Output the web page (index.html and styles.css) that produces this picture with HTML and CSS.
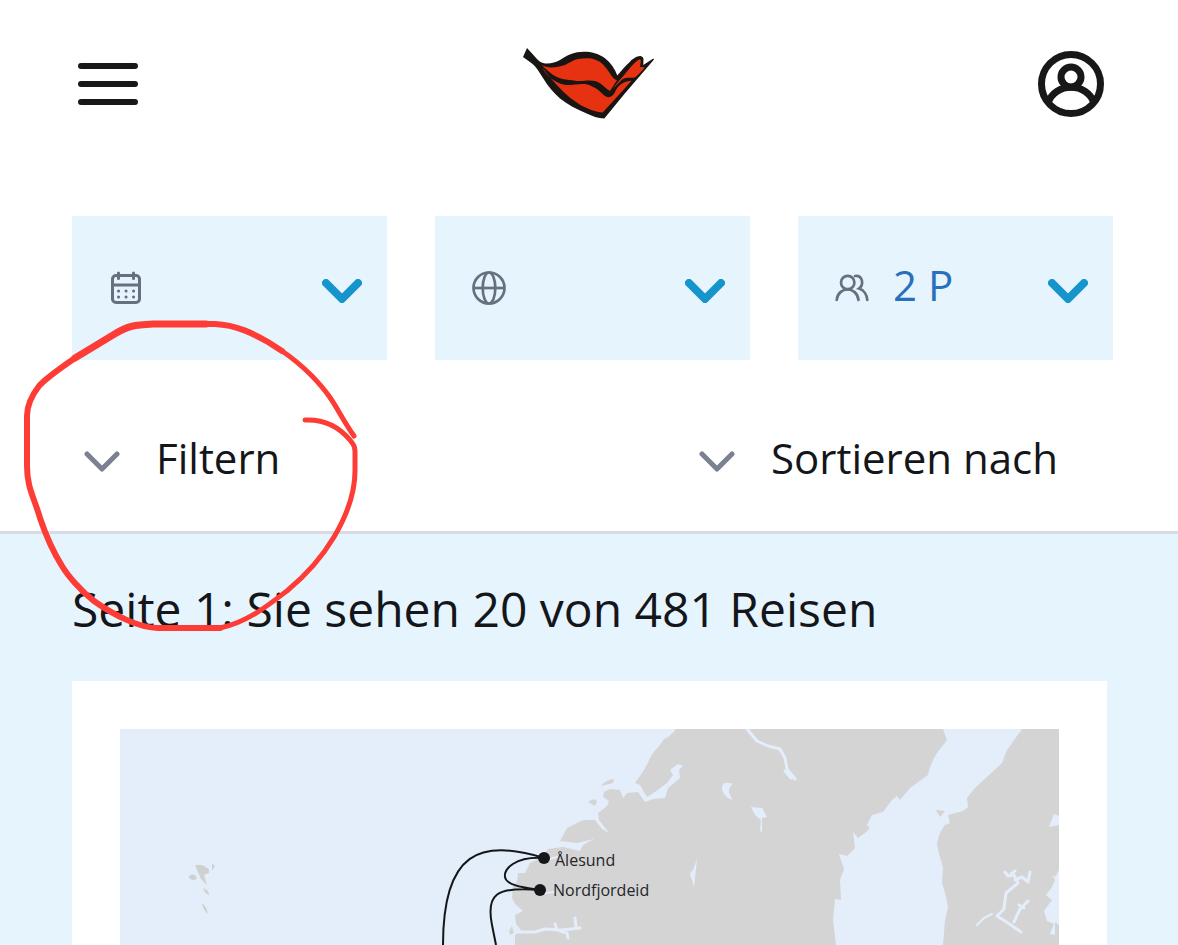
FILE: index.html
```html
<!DOCTYPE html>
<html lang="de">
<head>
<meta charset="utf-8">
<meta name="viewport" content="width=device-width, initial-scale=1">
<title>Reisen</title>
<link rel="stylesheet" href="styles.css">
</head>
<body>
<header class="header">
  <button class="icon-button menu-button" type="button" aria-label="Menü">
    <svg width="60" height="42" viewBox="0 0 60 42" stroke="#181818" stroke-width="6" stroke-linecap="round"><path d="M3 3H57M3 21H57M3 39H57"/></svg>
  </button>
  <a class="logo" href="#" aria-label="Startseite">
    <svg width="132" height="72" viewBox="0 0 132 72">
      <path fill="#181512" d="M0 9L4 0L12 8.700C16 14 20 15.500 24 15.500C29 15.500 33 14 37 12C43 8 48 5.500 54 4.300C64 3 73 4 82 10.300C88 15 92 21 94.300 27.500C99 22 102 18 107 13.700C111 9.500 119 5 120.500 11L120.300 17L130.300 10.500L131 11.500L102 45.300L81.300 70.500C75 70.500 69 68 63.700 65.500C53 61 44 56 37 50.500C30 44 25 38 20.300 30.500C16 24 13 18.500 8.700 15.300Z"/>
      <path fill="#e73211" d="M18.700 17C24 20.500 33 20 42 17C46 15 50 12 55 11C60 10 64 10 68.700 10.500C75 12 79 15 82 18.700C87 24 89 31 94 32L87 43C82 40 78 34.500 72 33C66 31.500 60 33.500 53.700 33C47 32 42 32 37 30.300C30 28 25 23 18.700 17Z"/>
      <path fill="#e73211" d="M19 19C22 25 26 29.500 30.300 32C35 35 39 36.500 43.700 37C50 37 57 35.500 62 36C68 37 72 40 75.300 42C79 45 82 49.500 86 49.300C92 48 92 42 95 39C99 34.500 103 33.500 108.700 32.500L100.300 42L79.700 64.500C74 64 69 62.500 63.700 60C53 55 46 49 40.300 43.700C32 35 25 28 19 19Z"/>
      <path fill="#e73211" d="M95 34C102 27 108 17 115.300 12C118 11 118 12 117.700 14L117 19L122 19.300C118 24 115 27 112 29.500C106 30 102 29 98.700 32L89 41.500Z"/>
    </svg>
  </a>
  <button class="icon-button account-button" type="button" aria-label="Konto">
    <svg width="66" height="66" viewBox="0 0 66 66" fill="none" stroke="#181818" stroke-width="7"><circle cx="33" cy="33" r="29.500"/><circle cx="33" cy="26" r="10"/><path d="M10 52C17 31 49 31 56 52"/></svg>
  </button>
</header>

<main>
  <form class="search">
    <button class="field" type="button" aria-label="Reisezeitraum">
      <svg class="field-icon" width="36" height="36" viewBox="0 0 36 36" fill="none" stroke="#687080" stroke-width="3" stroke-linecap="round" stroke-linejoin="round"><rect x="4.500" y="5.500" width="27" height="27" rx="3.500"/><path d="M4.500 15H31.500M10.500 3V8.500M25.500 3V8.500"/><path d="M10.500 21h.1M18 21h.1M25.500 21h.1M10.500 27h.1M18 27h.1M25.500 27h.1"/></svg>
      <span class="field-value"></span>
      <svg class="field-arrow" width="40" height="24" viewBox="0 0 40 24"><path d="M4 4L20 20L36 4"/></svg>
    </button>
    <label class="field">
      <svg class="field-icon" width="36" height="36" viewBox="0 0 36 36" fill="none" stroke="#687080" stroke-width="2.700"><circle cx="18" cy="18" r="15.500"/><ellipse cx="18" cy="18" rx="6.300" ry="15.500"/><path d="M2.500 18H33.500"/></svg>
      <select class="field-value" aria-label="Reiseziel"><option></option></select>
      <svg class="field-arrow" width="40" height="24" viewBox="0 0 40 24"><path d="M4 4L20 20L36 4"/></svg>
    </label>
    <label class="field">
      <svg class="field-icon" width="36" height="36" viewBox="0 0 36 36" fill="none" stroke="#687080" stroke-width="2.700" stroke-linecap="round"><circle cx="13.700" cy="12.500" r="6.700"/><path d="M2.700 30C4 16 23 16 24.500 30M21 6C29 5 30 15 25 18.500C30 20 33 25 33.300 30"/></svg>
      <select class="field-value" aria-label="Personen"><option>2 P</option></select>
      <svg class="field-arrow" width="40" height="24" viewBox="0 0 40 24"><path d="M4 4L20 20L36 4"/></svg>
    </label>
  </form>

  <div class="toolbar">
    <button class="tool" type="button">
      <svg class="tool-arrow" width="36" height="22" viewBox="0 0 36 22"><path d="M3 3L18 18L33 3"/></svg>
      Filtern
    </button>
    <button class="tool" type="button">
      <svg class="tool-arrow" width="36" height="22" viewBox="0 0 36 22"><path d="M3 3L18 18L33 3"/></svg>
      Sortieren nach
    </button>
  </div>

  <section class="results">
    <h1 class="title">Seite 1: Sie sehen 20 von 481 Reisen</h1>
    <article class="card">
      <svg class="map" viewBox="120 729 939 216" role="img" aria-label="Reiseroute">
        <rect x="120" y="729" width="939" height="216" fill="#e4eefb"/>
        <path fill="#d4d4d4" d="M676 729Q670 737 664 739L660 745Q650 755 648 763L642 773L635 783L640 785L647 797Q657 791 667 783L673 775L670 770L678 764L683 766L679 770L680 778L668 788L665 798L653 799L645 802L638 792L627 793L623 798L620 790L610 789L604 792L603 797L609 801L607 806L598 813L599 820L609 833L602 829L595 820L583 820L567 828L560 841L577 843L594 839L583 845L580 851L563 847L548 849L542 857L530 863L525 873L518 873L517 882L513 885L512 898L515 904L523 911L515 915L516 924L521 930L515 935V945H1059V729Z"/>
        <path fill="#d4d4d4" d="M601 786Q605 780 614 779L613 783ZM588 802Q594 797 597 801L595 806ZM509 931L512 926L514 933L510 935Z"/>
        <path fill="#e4eefb" d="M943 729L947 740L937 753Q931 762 928 775L910 788L900 800L897 796L892 800L883 812L872 815L867 825L870 828L865 833L858 838L853 832L855 848L847 856L839 854L844 869L840 880L841 900L835 899L833 920L836 945H943L945 920L948 907Q946 894 942 883L943 867Q939 855 937 845Q938 834 945 825L950 823L948 815L963 811L968 807L967 798L975 788L1002 763L1007 750L1022 729Z"/>
        <path fill="#d4d4d4" d="M936 810L945 811L940 817Z"/>
        <g fill="none" stroke="#e4eefb" stroke-width="3" stroke-linecap="round" stroke-linejoin="round">
          <path d="M747 729L757 741L768 746L780 749L785 758L787 769L795 779M785 771L791 778"/>
          <path d="M516 932L535 932L545 929L562 930L580 928M555 924L557 930L567 933L568 938M575 918L576 927"/>
          <path d="M550 859L557 857M545 893L555 892" stroke-width="2"/>
          <path d="M1005 872L1008 876L1014 875L1018 883L1006 893L1004 909L997 916L1008 923L1021 932M1011 874L1015 871M1015 880L1022 877L1028 882L1030 872M1028 901L1020 909L1014 922M1019 905L1024 908"/>
          <path d="M977 925L984 918L992 914" stroke-width="2"/>
        </g>
        <path fill="#e4eefb" d="M733 784Q721 780 722 790Q725 798 733 800Q725 790 733 784ZM751 807L762 808L767 817L762 818L762 833L760 830L761 820L755 815ZM697 859L693 870L690 874L692 880L694 887L695 878ZM1059 816L1054 814L1049 827L1059 825ZM1059 870L1055 877L1052 875L1055 880L1052 887L1046 895L1052 900L1044 911L1047 921L1054 924L1050 934L1055 935L1055 922L1059 925Z"/>
        <path fill="#cfd1cf" d="M195 865L202 865L209 869L209 873L204 875L207 885L201 879ZM189 876Q194 872 197 878Q194 882 189 878ZM203 888Q209 890 209 895Q204 893 203 888ZM202 903Q207 907 208 914Q203 910 202 903ZM212 863L215 866L212 871Z"/>
        <path fill="none" stroke="#14161a" stroke-width="2" d="M544 858C480 838 443 852 443 945M544 858C515 856 504 869 505 877C506 886 528 888 540 890C495 886 486 895 492 925L496 945"/>
        <g fill="#14161a"><circle cx="544" cy="858" r="6"/><circle cx="540" cy="890" r="6"/></g>
        <text class="map-label" x="555" y="866">Ålesund</text>
        <text class="map-label" x="553" y="896">Nordfjordeid</text>
      </svg>
    </article>
  </section>
</main>

<svg class="marker" width="380" height="660" viewBox="0 0 380 660" aria-hidden="true">
  <path stroke-width="5" d="M305 420C325 419 340 428 350 440C354 445 355 447 355 452V471C355 492 347 515 334 537C322 557 306 575 288 590C270 604 248 622 220 628"/>
  <path stroke-width="6" d="M220 628H158C140 628 115 616 94 601C81 591 68 576 62 566C52 550 45 533 40 518C34 497 27 488 27 466V416C27 406 32 395 39 386C47 377 62 367 75 358"/>
  <path stroke-width="7" d="M75 358L113 335C129 325 135 325 155 324H206"/>
  <path stroke-width="6" d="M206 324H215C237 325 254 334 268 342L282 351"/>
  <path stroke-width="5" d="M282 351C294 359 302 366 312 376C336 401 336 410 354 436"/>
</svg>
</body>
</html>
```
FILE: styles.css
```css
* {
  box-sizing: border-box;
}

body {
  position: relative;
  margin: 0;
  background: #fff;
  color: #14161a;
  font-family: "Open Sans", "Noto Sans", sans-serif;
  font-size: 42px;
}

svg {
  display: block;
  flex: none;
}

button,
select {
  padding: 0;
  border: 0;
  background: none;
  color: inherit;
  font: inherit;
  cursor: pointer;
}

.header {
  display: grid;
  grid-template-columns: 1fr auto 1fr;
  align-items: center;
  height: 168px;
  padding: 0 74px;
}

.menu-button {
  justify-self: start;
  padding: 0 4px;
}

.account-button {
  justify-self: end;
}

.search {
  display: grid;
  grid-template-columns: repeat(3, 1fr);
  gap: 48px;
  padding: 48px 65px 0 72px;
}

.field {
  display: flex;
  align-items: center;
  height: 144px;
  padding: 0 25px 0 36px;
  background: #e6f4fe;
  color: #2a6fbb;
  cursor: pointer;
}

.field-value {
  flex: 1;
  min-width: 0;
  height: 72px;
  margin: 0 23px;
  padding-bottom: 8px;
  appearance: none;
}

.field-arrow {
  margin-top: 6px;
  fill: none;
  stroke: #1595cc;
  stroke-width: 8px;
  stroke-linecap: round;
  stroke-linejoin: round;
}

.toolbar {
  display: flex;
  justify-content: space-between;
  padding: 66px 120px 41px 84px;
  border-bottom: 3px solid #d7dbe6;
}

.tool {
  display: flex;
  align-items: center;
  gap: 36px;
  line-height: 64px;
}

.tool-arrow {
  margin-top: 8px;
  fill: none;
  stroke: #7b8190;
  stroke-width: 5px;
  stroke-linecap: round;
  stroke-linejoin: round;
}

.results {
  padding: 39px 71px 0 72px;
  background: #e6f4fe;
}

.title {
  margin: 0 0 36px;
  font-size: 48px;
  font-weight: 400;
  line-height: 72px;
}

.card {
  padding: 48px 48px 0;
  background: #fff;
}

.map {
  width: 100%;
  height: auto;
}

.map-label {
  fill: #24262a;
  font-size: 16px;
}

.marker {
  position: absolute;
  top: 0;
  left: 0;
  fill: none;
  stroke: #fd3d35;
  stroke-linecap: round;
  stroke-linejoin: round;
  pointer-events: none;
}
```
